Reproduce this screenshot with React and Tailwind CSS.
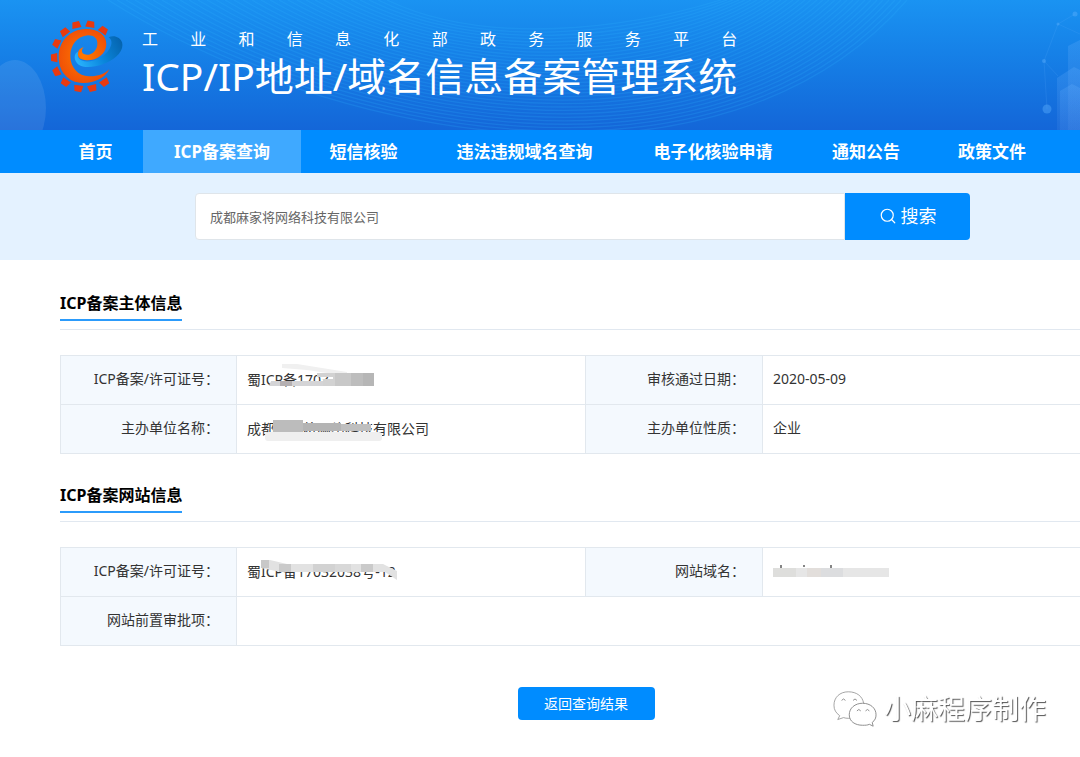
import { Search } from 'lucide-react';

const navItems = [
  { label: '首页', width: 'w-[95px]' },
  { label: 'ICP备案查询', width: 'w-[158px]', active: true },
  { label: '短信核验', width: 'w-[125px]' },
  { label: '违法违规域名查询', width: 'w-[197px]' },
  { label: '电子化核验申请', width: 'w-[180px]' },
  { label: '通知公告', width: 'w-[126px]' },
  { label: '政策文件', width: 'w-[126px]' },
];

// posisi x, y dan sudut tiap gigi roda
const teeth = [
  [62, 54, -37],
  [97, 33, -12],
  [139, 31, 10],
  [178, 49, 35],
  [38, 88, -64],
  [31, 131, -92],
  [38, 173, -117],
  [64, 205, -145],
  [103, 223, -171],
  [145, 222, 166],
  [182, 205, 145],
];
const waves = Array.from({ length: 32 }, (_, i) => i);

function Logo() {
  return (
    <svg viewBox="0 0 258 258" className="size-[86px] shrink-0" aria-hidden="true">
      <defs>
        <radialGradient id="flame" cx="0.5" cy="0.5" r="0.6">
          <stop offset="0" stopColor="#ff7a00" />
          <stop offset="1" stopColor="#ee4a08" />
        </radialGradient>
        <linearGradient id="swoosh" x1="0" y1="0.6" x2="1" y2="0.3">
          <stop offset="0" stopColor="#27b0fb" />
          <stop offset="0.5" stopColor="#0a86dc" />
          <stop offset="1" stopColor="#0565b0" />
        </linearGradient>
      </defs>
      {teeth.map(([x, y, angle]) => (
        <path key={angle} d="M-10 -10 H10 L14 9 H-14 Z" fill="#e83a10" transform={`translate(${x} ${y}) rotate(${angle})`} />
      ))}
      <path d="M104 112 C88 118 88 140 104 152 C128 168 186 154 216 128 C242 106 242 76 216 68 C208 66 200 67 194 70 C214 84 196 116 168 132 C144 146 112 146 104 132 C100 124 102 116 104 112 Z" fill="url(#swoosh)" />
      <path d="M196 166 C184 192 150 208 116 207 C72 206 43 172 44 126 C45 82 78 46 124 45 C160 44 187 62 187 90 C187 120 158 140 128 139 C110 138 100 130 102 118 C103 108 109 102 119 99 C112 106 112 116 120 120 C136 128 158 114 160 92 C162 74 150 64 132 64 C100 66 79 94 79 126 C79 162 104 186 134 187 C160 188 182 180 196 166 Z" fill="url(#flame)" />
    </svg>
  );
}

// Garis gelombang dan gedung di latar header
function HeaderBackdrop() {
  return (
    <svg viewBox="0 0 1080 130" preserveAspectRatio="xMidYMid slice" className="absolute inset-0 size-full" aria-hidden="true">
      <defs>
        <linearGradient id="tower" x1="0" y1="0" x2="0" y2="1">
          <stop offset="0" stopColor="#6fb6ff" stopOpacity="0.22" />
          <stop offset="1" stopColor="#6fa4f0" stopOpacity="0.12" />
        </linearGradient>
      </defs>
      <ellipse cx="15" cy="108" rx="31" ry="48" fill="#fff" opacity="0.09" />
      <g fill="none" stroke="#2fb4ff" strokeWidth="1.3" opacity="0.2">
        {waves.map((i) => (
          <path key={i} d={`M${108 + i * 9} 0 C${330 + i * 5} ${140 - i * 3} ${720 - i * 3} ${215 - i * 6} ${907 - i * 6} 0`} />
        ))}
      </g>
      <path d="M1058 24 L1075 14 M1058 24 L1044 61 L1047 109 M1044 61 L1058 76 M1058 24 L1080 34" fill="none" stroke="#6bb8ff" strokeWidth="0.7" opacity="0.2" />
      <g fill="#5fb2ff" opacity="0.4">
        <circle cx="1075" cy="14" r="2.5" />
        <circle cx="1058" cy="24" r="1.5" />
        <circle cx="1044" cy="61" r="2" />
        <circle cx="1047" cy="109" r="4.5" />
      </g>
      <g fill="url(#tower)">
        <path d="M1068 46 L1080 40 V130 H1068 Z" />
        <path d="M1057 78 L1074 67 L1080 70 V130 H1057 Z" />
        <path d="M1060 91 L1072 84 L1080 88 V130 H1060 Z" />
      </g>
    </svg>
  );
}

function SectionTitle({ children }) {
  return (
    <div className="border-b border-[#e1e8f0] pb-2">
      <h2 className="inline-block border-b-2 border-[#2b9bfb] text-base leading-8 font-bold text-black align-top">{children}</h2>
    </div>
  );
}

function Th({ children }) {
  return <th scope="row" className="h-[49px] border border-[#e2e8ee] bg-[#f4f9fe] pr-[17px] pb-0.5 text-right font-normal">{children}</th>;
}

function Td({ children, colSpan }) {
  return <td colSpan={colSpan} className="h-[49px] border border-[#e2e8ee] px-[10px] pb-0.5">{children}</td>;
}

function InfoTable({ children }) {
  return (
    <table className="mt-[25px] w-full table-fixed border-collapse text-sm text-[#333]">
      <colgroup>
        <col className="w-[176px]" />
        <col />
        <col className="w-[177px]" />
        <col />
      </colgroup>
      <tbody>{children}</tbody>
    </table>
  );
}

// Teks dengan coretan mosaik di atasnya
function Masked({ text, children }) {
  return (
    <span className="relative inline-block h-5 min-w-[120px] leading-5 whitespace-nowrap align-middle">
      {text}
      <svg width="190" height="34" viewBox="0 0 190 34" className="absolute -top-[7px] left-0" aria-hidden="true">{children}</svg>
    </span>
  );
}

export default function App() {
  return (
    <div className="overflow-x-hidden bg-white font-['Noto_Sans','Noto_Sans_CJK_SC',sans-serif]">
      <header className="relative h-[130px] overflow-hidden bg-linear-to-b from-[#1a93f2] to-[#1466d8]">
        <HeaderBackdrop />
        <div className="relative flex items-start pt-[14px] pl-[44px] text-white">
          <Logo />
          <div className="ml-3 pt-[13px]">
            <p className="text-base leading-6 [text-align-last:justify]">工业和信息化部政务服务平台</p>
            <h1 className="text-[39px] leading-[50px] whitespace-nowrap">ICP/IP地址/域名信息备案管理系统</h1>
          </div>
        </div>
      </header>

      <nav className="flex h-[43px] bg-[#008cff] pl-12">
        {navItems.map((item) => (
          <a
            key={item.label}
            href="#"
            className={`${item.width} flex shrink-0 items-center justify-center text-[17px] font-bold whitespace-nowrap text-white ${item.active ? 'bg-[#3fa9ff]' : ''}`}
          >
            {item.label}
          </a>
        ))}
      </nav>

      <form className="flex h-[87px] items-center bg-[#e4f2ff] pr-[110px] pl-[195px]" onSubmit={(e) => e.preventDefault()}>
        <input
          type="text"
          aria-label="搜索"
          defaultValue="成都麻家将网络科技有限公司"
          className="h-[47px] min-w-0 flex-1 rounded-l border border-[#dfe5ea] bg-white px-[14px] text-[13px] text-[#666] outline-none"
        />
        <button type="submit" className="flex h-[47px] w-[125px] items-center justify-center gap-1 rounded-r bg-[#008cff] pb-0.5 text-lg text-white">
          <Search size={18} strokeWidth={1.6} />
          搜索
        </button>
      </form>

      <main className="-mr-8 pt-[27px] pl-[60px]">
        <section>
          <SectionTitle>ICP备案主体信息</SectionTitle>
          <InfoTable>
            <tr>
              <Th>ICP备案/许可证号：</Th>
              <Td>
                <Masked text="蜀ICP备17032">
                  <path d="M35 1 L50 1 L100 9 V13 L60 7 L35 5 Z" fill="#f0f0f0" />
                  <path d="M24 18 H88 V23 H22 Z" fill="#d4d4d6" />
                  <rect x="33" y="18" width="12" height="5" fill="#b5b0b2" />
                  <path d="M70 10 H92 V23 H76 V16 H86 V14 H70 Z" fill="#d2d2d2" />
                  <rect x="88" y="10" width="16" height="13" fill="#c8c8c8" />
                  <rect x="104" y="10" width="12" height="13" fill="#bdbdbd" />
                  <rect x="116" y="10" width="11" height="13" fill="#b6b6b6" />
                </Masked>
              </Td>
              <Th>审核通过日期：</Th>
              <Td>2020-05-09</Td>
            </tr>
            <tr>
              <Th>主办单位名称：</Th>
              <Td>
                <Masked text="成都麻家将网络科技有限公司">
                  <rect x="26" y="8" width="30" height="12" fill="#bcbcbc" />
                  <rect x="56" y="11" width="38" height="8" fill="#b4b4b4" />
                  <rect x="94" y="12" width="30" height="7" fill="#bfbfbf" />
                  <rect x="18" y="20" width="117" height="9" rx="3" fill="#efefef" />
                </Masked>
              </Td>
              <Th>主办单位性质：</Th>
              <Td>企业</Td>
            </tr>
          </InfoTable>
        </section>

        <section className="mt-[25px]">
          <SectionTitle>ICP备案网站信息</SectionTitle>
          <InfoTable>
            <tr>
              <Th>ICP备案/许可证号：</Th>
              <Td>
                <Masked text="蜀ICP备17032038号-12">
                  <path d="M14 5 H23 L40 9 H136 L150 16 V25 L138 17 H34 L14 13 Z" fill="#e2e2e2" />
                  <rect x="14" y="5" width="8" height="8" fill="#c8c8c8" />
                  <rect x="32" y="9" width="12" height="8" fill="#cacaca" />
                  <rect x="66" y="9" width="22" height="8" fill="#d2d2d2" />
                  <rect x="88" y="9" width="16" height="8" fill="#d8d8d8" />
                  <rect x="114" y="9" width="12" height="8" fill="#cacaca" />
                </Masked>
              </Td>
              <Th>网站域名：</Th>
              <Td>
                <Masked>
                  <path d="M8 10 V14 M31 10 V12 M58 10 V14" stroke="#444" strokeWidth="1.3" />
                  <rect x="0" y="13" width="116" height="9" fill="#e6e6e6" />
                  <rect x="0" y="13" width="23" height="9" fill="#dededc" />
                  <rect x="34" y="13" width="14" height="9" fill="#e2dedb" />
                  <rect x="48" y="13" width="22" height="9" fill="#dcdddf" />
                </Masked>
              </Td>
            </tr>
            <tr>
              <Th>网站前置审批项：</Th>
              <Td colSpan={3} />
            </tr>
          </InfoTable>
        </section>

        <div className="mt-[41px] flex h-[70px] items-start justify-center">
          <button type="button" className="h-[33px] w-[137px] rounded bg-[#008cff] text-sm text-white">返回查询结果</button>
        </div>
      </main>

      {/* Watermark */}
      <div className="fixed right-[34px] bottom-[28px] flex items-center gap-[7px]">
        <svg viewBox="0 0 46 38" className="h-[38px] w-[44px]" fill="#fff" stroke="#8a8a8a" aria-hidden="true">
          <path d="M16 1 C7 1 1 7 1 15 C1 20 3 23 7 26 L5 30 L11 28 C14 29 18 29 21 28 L32 13 C31 6 25 1 16 1 Z" strokeWidth="0.8" />
          <path d="M31 13 C23 13 17 18 17 25 C17 32 23 36 31 36 C34 36 36 36 38 35 L42 37 L41 33 C44 31 45 28 45 25 C45 18 39 13 31 13 Z" strokeWidth="1" />
          <path d="M9 10 q2 -3 4 0 M21 10 q2 -3 4 0 M25 21 q2 -3 4 0 M34 21 q2 -3 4 0" fill="none" strokeWidth="1" />
        </svg>
        <span className="text-[27px] leading-10 text-white [text-shadow:1px_1px_1px_#555]">小麻程序制作</span>
      </div>
    </div>
  );
}
